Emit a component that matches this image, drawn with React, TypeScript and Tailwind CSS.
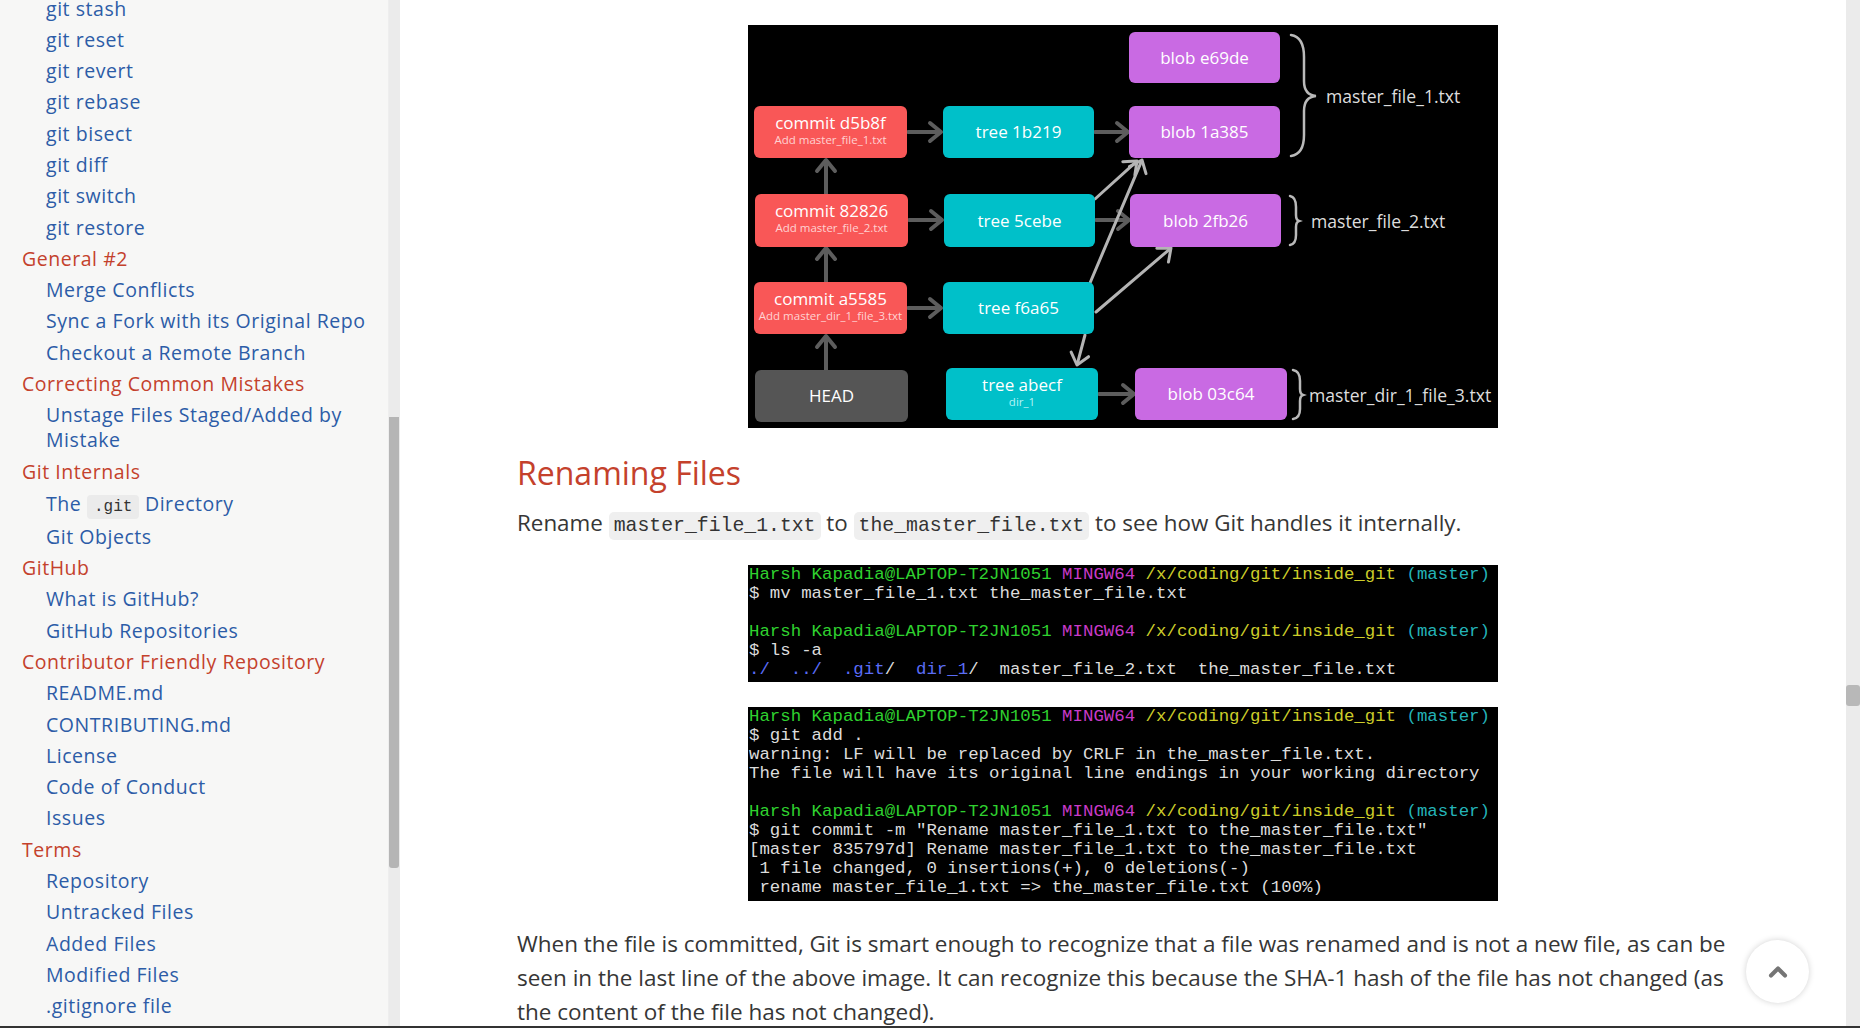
import { ChevronUp } from 'lucide-react';

type NavItem = { label: string; head?: boolean; code?: boolean };

const navItems: NavItem[] = [
  { label: 'git stash' },
  { label: 'git reset' },
  { label: 'git revert' },
  { label: 'git rebase' },
  { label: 'git bisect' },
  { label: 'git diff' },
  { label: 'git switch' },
  { label: 'git restore' },
  { label: 'General #2', head: true },
  { label: 'Merge Conflicts' },
  { label: 'Sync a Fork with its Original Repo' },
  { label: 'Checkout a Remote Branch' },
  { label: 'Correcting Common Mistakes', head: true },
  { label: 'Unstage Files Staged/Added by Mistake' },
  { label: 'Git Internals', head: true },
  { label: '.git', code: true },
  { label: 'Git Objects' },
  { label: 'GitHub', head: true },
  { label: 'What is GitHub?' },
  { label: 'GitHub Repositories' },
  { label: 'Contributor Friendly Repository', head: true },
  { label: 'README.md' },
  { label: 'CONTRIBUTING.md' },
  { label: 'License' },
  { label: 'Code of Conduct' },
  { label: 'Issues' },
  { label: 'Terms', head: true },
  { label: 'Repository' },
  { label: 'Untracked Files' },
  { label: 'Added Files' },
  { label: 'Modified Files' },
  { label: '.gitignore file' },
];

function Sidebar() {
  return (
    <aside className="relative flex h-full w-[400px] shrink-0 bg-[#f7f7f6]">
      <ul className="mt-[-4.5px] flex w-[388px] flex-col gap-[6.3px] pr-4 font-['Open_Sans',sans-serif] text-[19.5px] leading-[25px] tracking-[0.028em]">
        {navItems.map((item) => {
          if (item.head) {
            return (
              <li key={item.label} className="pl-[22px] text-[#c4412c]">
                {item.label}
              </li>
            );
          }
          if (item.code) {
            return (
              <li key={item.label} className="h-[27.5px] pl-[46px] leading-[27.5px] text-[#2c5ca7]">
                The{' '}
                <code className="rounded-[4px] bg-[#ebebeb] px-[7px] py-[3px] font-['Liberation_Mono',monospace] text-[16px] leading-none tracking-normal text-[#333]">
                  .git
                </code>{' '}
                Directory
              </li>
            );
          }
          if (item.label.startsWith('Unstage')) {
            return (
              <li key={item.label} className="pl-[46px] text-[#2c5ca7]">
                Unstage Files Staged/Added by
                <br />
                Mistake
              </li>
            );
          }
          return (
            <li key={item.label} className="pl-[46px] text-[#2c5ca7]">
              {item.label}
            </li>
          );
        })}
      </ul>
      {/* sidebar scrollbar */}
      <div className="ml-auto flex h-full w-[12px] flex-col border-l border-[#eeeeee] bg-[#ebebeb]">
        <div className="mt-[417px] h-[451px] w-[10px] rounded-b-[3px] bg-[#b5b5b5]" />
      </div>
    </aside>
  );
}

type Box = { x: number; y: number; w: number; h: number; title: string; sub?: string; kind: 'commit' | 'tree' | 'blob' | 'head' };

const boxes: Box[] = [
  { x: 381, y: 7, w: 151, h: 51, title: 'blob e69de', kind: 'blob' },
  { x: 6, y: 81, w: 153, h: 52, title: 'commit d5b8f', sub: 'Add master_file_1.txt', kind: 'commit' },
  { x: 195, y: 81, w: 151, h: 52, title: 'tree 1b219', kind: 'tree' },
  { x: 381, y: 81, w: 151, h: 52, title: 'blob 1a385', kind: 'blob' },
  { x: 7, y: 169, w: 153, h: 53, title: 'commit 82826', sub: 'Add master_file_2.txt', kind: 'commit' },
  { x: 196, y: 169, w: 151, h: 53, title: 'tree 5cebe', kind: 'tree' },
  { x: 382, y: 169, w: 151, h: 53, title: 'blob 2fb26', kind: 'blob' },
  { x: 6, y: 257, w: 153, h: 52, title: 'commit a5585', sub: 'Add master_dir_1_file_3.txt', kind: 'commit' },
  { x: 195, y: 257, w: 151, h: 52, title: 'tree f6a65', kind: 'tree' },
  { x: 7, y: 345, w: 153, h: 52, title: 'HEAD', kind: 'head' },
  { x: 198, y: 343, w: 152, h: 52, title: 'tree abecf', sub: 'dir_1', kind: 'tree' },
  { x: 387, y: 343, w: 152, h: 52, title: 'blob 03c64', kind: 'blob' },
];

const boxColor = {
  commit: 'bg-[#f95757]',
  tree: 'bg-[#00c0c9]',
  blob: 'bg-[#c96ae3]',
  head: 'bg-[#555555]',
};

const subColor = {
  commit: 'text-[#ffd2d2]',
  tree: 'text-[#b5f3f5]',
  blob: 'text-white',
  head: 'text-white',
};

function Arrow({ x1, y1, x2, y2, color, width }: { x1: number; y1: number; x2: number; y2: number; color: string; width: number }) {
  const dx = x2 - x1;
  const dy = y2 - y1;
  const len = Math.sqrt(dx * dx + dy * dy);
  const ux = dx / len;
  const uy = dy / len;
  const a = 11;
  const s = 9;
  const p1 = `${x2 - ux * a - uy * s},${y2 - uy * a + ux * s}`;
  const p2 = `${x2 - ux * a + uy * s},${y2 - uy * a - ux * s}`;
  return (
    <g stroke={color} strokeWidth={width} fill="none" strokeLinecap="round" strokeLinejoin="round">
      <line x1={x1} y1={y1} x2={x2 - ux * 2} y2={y2 - uy * 2} />
      <polyline points={`${p1} ${x2},${y2} ${p2}`} />
    </g>
  );
}

function Diagram() {
  const dark = '#5d5d5d';
  const light = '#b4b4b4';
  return (
    <div className="relative mx-auto h-[403px] w-[750px] bg-black font-['Open_Sans',sans-serif]">
      <svg className="absolute inset-0" width="750" height="403" viewBox="0 0 750 403">
        <Arrow x1={160} y1={107} x2={193} y2={107} color={dark} width={4} />
        <Arrow x1={347} y1={107} x2={380} y2={107} color={dark} width={4} />
        <Arrow x1={161} y1={195} x2={194} y2={195} color={dark} width={4} />
        <Arrow x1={348} y1={195} x2={381} y2={195} color={dark} width={4} />
        <Arrow x1={160} y1={283} x2={193} y2={283} color={dark} width={4} />
        <Arrow x1={351} y1={369} x2={386} y2={369} color={dark} width={4} />
        <Arrow x1={78} y1={169} x2={78} y2={135} color={dark} width={4} />
        <Arrow x1={78} y1={257} x2={78} y2={223} color={dark} width={4} />
        <Arrow x1={78} y1={345} x2={78} y2={311} color={dark} width={4} />
        <Arrow x1={347} y1={174} x2={389} y2={136} color={light} width={3} />
        <Arrow x1={342} y1={258} x2={394} y2={135} color={light} width={3} />
        <Arrow x1={348} y1={287} x2={423} y2={223} color={light} width={3} />
        <Arrow x1={337} y1={310} x2={329} y2={340} color={light} width={3} />
        <g stroke="#b9b9b9" strokeWidth={2.5} fill="none" strokeLinecap="round">
          <path d="M543,10 Q556,12 556,32 L556,56 Q556,70 568,71 Q556,72 556,86 L556,110 Q556,129 543,131" />
          <path d="M542,171 Q548,172 548,182 L548,190 Q548,195 551,196 Q548,197 548,202 L548,210 Q548,219 542,220" />
          <path d="M545,345 Q552,346 552,356 L552,364 Q552,369 555,370 Q552,371 552,376 L552,384 Q552,393 545,394" />
        </g>
      </svg>
      {boxes.map((b) => (
        <div
          key={b.title}
          className={`absolute flex flex-col items-center rounded-[6px] text-white ${boxColor[b.kind]} ${b.sub ? 'justify-start pt-[7px]' : 'justify-center'}`}
          style={{ left: b.x, top: b.y, width: b.w, height: b.h }}
        >
          <span className="text-[17px] leading-[20px]">{b.title}</span>
          {b.sub && <span className={`text-[11.5px] leading-[14px] ${subColor[b.kind]}`}>{b.sub}</span>}
        </div>
      ))}
      <span className="absolute left-[578px] top-[60px] text-[17.6px] leading-[22px] text-[#dddddd]">master_file_1.txt</span>
      <span className="absolute left-[563px] top-[185px] text-[17.6px] leading-[22px] text-[#dddddd]">master_file_2.txt</span>
      <span className="absolute left-[561px] top-[359px] text-[17.6px] leading-[22px] text-[#dddddd]">master_dir_1_file_3.txt</span>
    </div>
  );
}

type Seg = [string, string];

const prompt: Seg[] = [
  ['Harsh Kapadia@LAPTOP-T2JN1051', 'text-[#2fd12f]'],
  [' MINGW64', 'text-[#c93ac9]'],
  [' /x/coding/git/inside_git', 'text-[#cdcd2a]'],
  [' (master)', 'text-[#24b3b8]'],
];

const W = 'text-[#dcdcdc]';
const B = 'text-[#5a6cf5]';

const term1: Seg[][] = [
  prompt,
  [['$ mv master_file_1.txt the_master_file.txt', W]],
  [],
  prompt,
  [['$ ls -a', W]],
  [
    ['./', B],
    ['  ', W],
    ['../', B],
    ['  ', W],
    ['.git', B],
    ['/  ', W],
    ['dir_1', B],
    ['/  master_file_2.txt  the_master_file.txt', W],
  ],
];

const term2: Seg[][] = [
  prompt,
  [['$ git add .', W]],
  [['warning: LF will be replaced by CRLF in the_master_file.txt.', W]],
  [['The file will have its original line endings in your working directory', W]],
  [],
  prompt,
  [['$ git commit -m "Rename master_file_1.txt to the_master_file.txt"', W]],
  [['[master 835797d] Rename master_file_1.txt to the_master_file.txt', W]],
  [[' 1 file changed, 0 insertions(+), 0 deletions(-)', W]],
  [[' rename master_file_1.txt => the_master_file.txt (100%)', W]],
];

function Terminal({ lines, height }: { lines: Seg[][]; height: string }) {
  return (
    <div className={`mx-auto w-[750px] overflow-hidden bg-black pl-[1px] font-['Liberation_Mono',monospace] text-[17.4px] leading-[19px] ${height}`}>
      {lines.map((line, i) => (
        <div key={i} className="h-[19px] whitespace-pre">
          {line.map(([t, c], j) => (
            <span key={j} className={c}>
              {t}
            </span>
          ))}
        </div>
      ))}
    </div>
  );
}

function InlineCode({ children }: { children: string }) {
  return (
    <code className="rounded-[5px] bg-[#efefef] px-[5px] py-[3px] font-['Liberation_Mono',monospace] text-[19.8px] leading-none text-[#333]">
      {children}
    </code>
  );
}

export default function App() {
  return (
    <div className="flex h-[1028px] w-[1860px] flex-col overflow-hidden bg-white">
      <div className="flex h-[1026px] min-h-0">
        <Sidebar />
        <main className="relative flex min-w-0 flex-1">
          <div className="ml-[117px] w-[1212px] pt-[25px] font-['Open_Sans',sans-serif] text-[#363636]">
            <Diagram />
            <h2 className="mt-[27px] text-[32px] leading-[36px] text-[#c4412c]">Renaming Files</h2>
            <p className="mt-[15px] h-[34px] text-[22.4px] leading-[34px]">
              Rename <InlineCode>master_file_1.txt</InlineCode> to <InlineCode>the_master_file.txt</InlineCode> to see how
              Git handles it internally.
            </p>
            <div className="mt-[25px]">
              <Terminal lines={term1} height="h-[117px]" />
            </div>
            <div className="mt-[25px]">
              <Terminal lines={term2} height="h-[194px]" />
            </div>
            <p className="mt-[26px] whitespace-nowrap text-[22.5px] leading-[34px]">
              When the file is committed, Git is smart enough to recognize that a file was renamed and is not a new file, as can be
              <br />
              seen in the last line of the above image. It can recognize this because the SHA-1 hash of the file has not changed (as
              <br />
              the content of the file has not changed).
            </p>
          </div>
          <button className="absolute left-[1346px] top-[940px] flex h-[63px] w-[63px] items-center justify-center rounded-full bg-white shadow-[0_0_6px_rgba(0,0,0,0.18)]">
            <ChevronUp size={28} strokeWidth={3.5} color="#757575" />
          </button>
          {/* page scrollbar */}
          <div className="ml-auto flex h-full w-[14px] shrink-0 flex-col bg-[#ebebeb]">
            <div className="mt-[685px] h-[21px] w-[14px] rounded-[3px] bg-[#b8b8b8]" />
          </div>
        </main>
      </div>
      <div className="h-[2px] bg-[#333]" />
    </div>
  );
}
